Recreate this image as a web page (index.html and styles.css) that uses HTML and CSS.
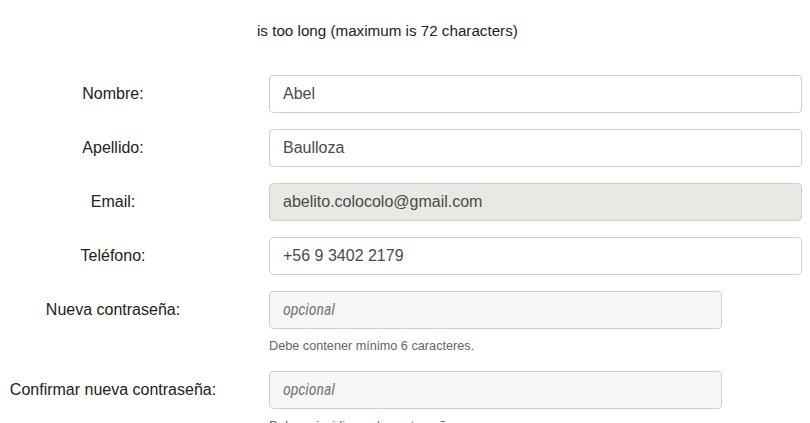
FILE: index.html
```html
<!DOCTYPE html>
<html lang="es">
<head>
<meta charset="utf-8">
<link rel="stylesheet" href="styles.css">
</head>
<body>
<div class="page">
  <p class="error">is too long (maximum is 72 characters)</p>
  <form class="form">
    <div class="row">
      <label class="label">Nombre:</label>
      <div class="field"><input class="input" type="text" value="Abel"></div>
    </div>
    <div class="row">
      <label class="label">Apellido:</label>
      <div class="field"><input class="input" type="text" value="Baulloza"></div>
    </div>
    <div class="row">
      <label class="label">Email:</label>
      <div class="field"><input class="input readonly" type="text" value="abelito.colocolo@gmail.com" readonly></div>
    </div>
    <div class="row">
      <label class="label">Teléfono:</label>
      <div class="field"><input class="input" type="text" value="+56 9 3402 2179"></div>
    </div>
    <div class="row">
      <label class="label">Nueva contraseña:</label>
      <div class="field short">
        <input class="input pwd" type="password" placeholder="opcional">
        <p class="help">Debe contener mínimo 6 caracteres.</p>
      </div>
    </div>
    <div class="row">
      <label class="label">Confirmar nueva contraseña:</label>
      <div class="field short">
        <input class="input pwd" type="password" placeholder="opcional">
        <p class="help">Debe coincidir con la contraseña.</p>
      </div>
    </div>
  </form>
</div>
</body>
</html>
```
FILE: styles.css
```css
* { box-sizing: border-box; }
html, body { margin: 0; padding: 0; background: #fff; }
body {
  font-family: "Liberation Sans", Arial, sans-serif;
  color: #333;
  overflow: hidden;
}
.page { padding: 0 8px 0 0; }
.error {
  margin: 0;
  padding-top: 21px;
  height: 75px;
  padding-left: 257px;
  font-size: 15.2px;
  line-height: 20px;
  color: #222;
}
.form { display: flex; flex-direction: column; gap: 16px; }
.row { display: flex; align-items: flex-start; }
.label {
  width: 226px;
  flex: none;
  text-align: center;
  font-size: 16px;
  line-height: 38px;
  color: #222;
}
.field { margin-left: 43px; width: 533px; }
.field.short { width: 453px; }
.input {
  display: block;
  width: 100%;
  height: 38px;
  border: 1px solid #ccced4;
  border-radius: 4px;
  padding: 0 12px 0 13px;
  font-family: "Liberation Sans", Arial, sans-serif;
  font-size: 16px;
  color: #4a4a4a;
  background: #fff;
  outline: none;
}
.input.readonly { background: #e8e9e2; }
.input.pwd { background: #f8f7f5; }
.input::placeholder {
  font-family: Roboto, "Liberation Sans", sans-serif;
  font-style: italic;
  font-stretch: condensed;
  font-size: 16px;
  color: #777;
  letter-spacing: -0.1px;
}
.help {
  margin: 0;
  padding-top: 10px;
  height: 26px;
  font-size: 12.7px;
  line-height: 15px;
  color: #666;
}
```
